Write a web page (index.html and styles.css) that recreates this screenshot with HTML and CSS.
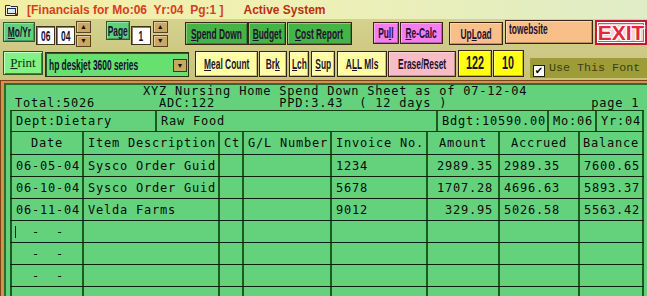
FILE: index.html
```html
<!DOCTYPE html>
<html>
<head>
<meta charset="utf-8">
<link rel="stylesheet" href="styles.css">
</head>
<body>
<div class="app">
  <div class="titlebar">
    <svg class="ticon" viewBox="0 0 13 12" width="13" height="12">
      <path d="M0.5 1.5 H5 L6 2.5 H12.5 V11.5 H0.5 Z" fill="#f6f2c8" stroke="#1a2a5a"/>
      <rect x="2.5" y="4.5" width="8" height="5" fill="#dfe6f4" stroke="#1a2a5a"/>
      <rect x="10" y="9.5" width="2" height="2" fill="#8a1a10"/>
    </svg>
    <span class="ttext">[Financials for Mo:06  Yr:04  Pg:1 ]</span>
    <span class="ttext status">Active System</span>
  </div>

  <div class="toolbar">
    <div class="bar bar1">
      <div class="btn b-lbl w-moyr"><span><u>M</u>o/Yr</span></div>
      <div class="field w-num ml1"><span>06</span></div>
      <div class="field w-num ml1"><span>04</span></div>
      <div class="spin ml1"><span class="sp">&#9650;</span><span class="sp">&#9660;</span></div>
      <div class="btn b-lbl w-page"><span>Page</span></div>
      <div class="field w-one ml1"><span>1</span></div>
      <div class="spin ml2"><span class="sp">&#9650;</span><span class="sp">&#9660;</span></div>
      <div class="btn b-green w-spend"><span><u>S</u>pend Down</span></div>
      <div class="btn b-green w-budget"><span><u>B</u>udget</span></div>
      <div class="btn b-green w-cost ml1"><span><u>C</u>ost Report</span></div>
      <div class="btn b-pink w-pull"><span>Pu<u>l</u>l</span></div>
      <div class="btn b-pink w-recalc ml1"><span><u>R</u>e-Calc</span></div>
      <div class="btn b-peach w-upload"><span>Up<u>L</u>oad</span></div>
      <div class="btn b-peach w-site"><span>towebsite</span></div>
      <div class="exit"><span>EXIT</span></div>
    </div>

    <div class="bar bar2">
      <div class="print"><u>P</u>rint</div>
      <div class="select"><span class="seltext">hp deskjet 3600 series</span><span class="drop">&#9660;</span></div>
      <div class="btn b-cream w-meal"><span><u>M</u>eal Count</span></div>
      <div class="btn b-cream w-brk ml1"><span>Br<u>k</u></span></div>
      <div class="btn b-cream w-lch ml2"><span><u>L</u>ch</span></div>
      <div class="btn b-cream w-sup ml2"><span><u>S</u>up</span></div>
      <div class="btn b-cream w-all ml2"><span>A<u>L</u>L Mls</span></div>
      <div class="btn b-rose w-erase ml1"><span>Erase/Reset</span></div>
      <div class="btn b-yellow w-122"><span>122</span></div>
      <div class="btn b-yellow w-10 ml1"><span>10</span></div>
      <div class="fontband"><span class="check">&#10004;</span><span class="fonttext">Use This Font</span></div>
    </div>
  </div>

  <div class="panel">
    <div class="sheet">
      <div class="head">                XYZ Nursing Home Spend Down Sheet as of 07-12-04
Total:5026        ADC:122        PPD:3.43  ( 12 days )                  page 1</div>

      <div class="dept">
        <div class="c">Dept:Dietary</div>
        <div class="c">Raw Food</div>
        <div class="c">Bdgt:10590.00</div>
        <div class="c">Mo:06</div>
        <div class="c last">Yr:04</div>
      </div>

      <div class="row hdr">
        <div class="c ctr">Date</div>
        <div class="c">Item Description</div>
        <div class="c">Ct</div>
        <div class="c">G/L Number</div>
        <div class="c">Invoice No.</div>
        <div class="c ctr">Amount</div>
        <div class="c ctr">Accrued</div>
        <div class="c ctr last">Balance</div>
      </div>

      <div class="row">
        <div class="c">06-05-04</div>
        <div class="c">Sysco Order Guid</div>
        <div class="c"></div>
        <div class="c"></div>
        <div class="c">1234</div>
        <div class="c num">2989.35</div>
        <div class="c">2989.35</div>
        <div class="c last">7600.65</div>
      </div>
      <div class="row">
        <div class="c">06-10-04</div>
        <div class="c">Sysco Order Guid</div>
        <div class="c"></div>
        <div class="c"></div>
        <div class="c">5678</div>
        <div class="c num">1707.28</div>
        <div class="c">4696.63</div>
        <div class="c last">5893.37</div>
      </div>
      <div class="row">
        <div class="c">06-11-04</div>
        <div class="c">Velda Farms</div>
        <div class="c"></div>
        <div class="c"></div>
        <div class="c">9012</div>
        <div class="c num">329.95</div>
        <div class="c">5026.58</div>
        <div class="c last">5563.42</div>
      </div>
      <div class="row">
        <div class="c"><span class="caret"></span>  -  -</div>
        <div class="c"></div><div class="c"></div><div class="c"></div><div class="c"></div><div class="c"></div><div class="c"></div><div class="c last"></div>
      </div>
      <div class="row">
        <div class="c">  -  -</div>
        <div class="c"></div><div class="c"></div><div class="c"></div><div class="c"></div><div class="c"></div><div class="c"></div><div class="c last"></div>
      </div>
      <div class="row">
        <div class="c">  -  -</div>
        <div class="c"></div><div class="c"></div><div class="c"></div><div class="c"></div><div class="c"></div><div class="c"></div><div class="c last"></div>
      </div>
      <div class="row">
        <div class="c"></div>
        <div class="c"></div><div class="c"></div><div class="c"></div><div class="c"></div><div class="c"></div><div class="c"></div><div class="c last"></div>
      </div>
    </div>
  </div>
</div>
</body>
</html>
```

FILE: styles.css
```css
* { box-sizing: border-box; margin: 0; padding: 0; }
html, body { width: 647px; height: 296px; overflow: hidden; }
body { background: #c8c27e; font-family: "Liberation Sans", Arial, sans-serif; }

.app { display: flex; flex-direction: column; height: 296px; }

/* title bar */
.titlebar {
  height: 19px; display: flex; align-items: center; padding-left: 5px;
  background: linear-gradient(90deg, #f4eea4 0%, #eef0b4 45%, #e0ecc6 100%);
}
.ticon { width: 13px; height: 12px; margin-right: 9px; margin-top: 1px; }
.ttext { font-size: 12px; font-weight: bold; color: #d2401e; white-space: pre; }
.status { margin-left: 20px; color: #b8300f; }

/* toolbars */
.toolbar { background: linear-gradient(180deg, #d4d28e 0%, #c8c27c 100%); }
.bar { display: flex; align-items: flex-start; padding-left: 3px; }
.bar1 { height: 30px; }
.bar2 { height: 31px; }
.ml1 { margin-left: 1px; }
.ml2 { margin-left: 2px; }

.btn, .field, .select {
  font-family: "Liberation Sans", Arial, sans-serif;
  font-weight: bold; font-size: 14px; color: #1e1030; white-space: nowrap;
}
.btn {
  display: flex; align-items: center; justify-content: center;
  border: 1px solid #3a2414;
  box-shadow: inset 1px 1px 0 rgba(255,255,255,.35), inset -1px -1px 0 rgba(0,0,0,.25);
}
.btn span, .field span { display: inline-block; transform: scaleX(.6); }
.b-lbl { background: #5fd07c; border-color: #2e5a2e; }
.b-green { background: #44b444; }
.b-pink { background: #f27ef0; }
.b-peach { background: #f8c088; }
.b-cream { background: #ffffa2; }
.b-rose { background: #f8bcc6; }
.b-yellow { background: #ffff12; font-size: 18px; }

.w-moyr { width: 32px; height: 20px; margin-top: 3px; }
.w-page { width: 24px; height: 19px; margin-top: 2px; margin-left: 15px; }
.field {
  height: 19px; margin-top: 7px; background: #fff; border: 1px solid #40301c;
  display: flex; align-items: center; justify-content: center;
  color: #101030;
  box-shadow: inset 1px 1px 0 #8a8070;
}
.w-num { width: 19px; }
.w-one { width: 20px; }
.spin { display: flex; flex-direction: column; gap: 2px; width: 15px; margin-top: 2px; }
.sp {
  height: 12px; background: #c8a862; border: 1px solid #5a4020;
  font-size: 7px; line-height: 10px; text-align: center; color: #1a1008;
  box-shadow: inset 1px 1px 0 rgba(255,255,255,.4);
}
.w-spend { width: 63px; height: 23px; margin-top: 3px; margin-left: 17px; }
.w-budget { width: 38px; height: 23px; margin-top: 3px; }
.w-cost { width: 65px; height: 23px; margin-top: 3px; }
.w-pull { width: 26px; height: 22px; margin-top: 3px; margin-left: 21px; }
.w-recalc { width: 43px; height: 22px; margin-top: 3px; }
.w-upload { width: 55px; height: 23px; margin-top: 3px; margin-left: 6px; }
.w-site { width: 88px; height: 24px; margin-top: 1px; margin-left: 2px; justify-content: flex-start; align-items: flex-start; padding: 0 0 0 3px; }
.w-site span { transform-origin: left center; }

.exit {
  width: 52px; height: 25px; margin-top: 1px; margin-left: 2px;
  border: 2px solid #c41a30; background: #f6d4d4;
  box-shadow: inset 0 0 0 1px #fff, inset 0 0 0 2px #e04a5a;
  display: flex; align-items: center; justify-content: center;
  font-family: "Liberation Sans", Arial, sans-serif; font-size: 21px; font-weight: bold; color: #e2283c;
  text-shadow: 1px 1px 0 #fff, -1px -1px 0 #fff, 1px -1px 0 #fff, -1px 1px 0 #fff;
  line-height: 1;
}

.print {
  width: 40px; height: 24px; margin-top: 2px;
  background: #82f282; border: 1px solid #2a5a2a;
  box-shadow: inset 1px 1px 0 #c8ffc8, inset -1px -1px 0 #3a8a3a;
  font-family: "Liberation Serif", "Times New Roman", serif; font-size: 13px; color: #143014;
  display: flex; align-items: center; justify-content: center;
}
.select {
  width: 144px; height: 25px; margin-top: 3px; margin-left: 2px;
  background: #66e06e; border: 1px solid #2a3018;
  box-shadow: inset 1px 1px 0 #2a5a2a;
  display: flex; align-items: center; padding-left: 3px; padding-right: 1px;
  color: #10102a;
}
.seltext { flex: 1; min-width: 0; display: block; transform: scaleX(.6); transform-origin: left center; }
.drop {
  flex: none; width: 14px; height: 13px; margin-top: 2px; background: #c8a862; border: 1px solid #4a3418;
  font-size: 7px; line-height: 11px; text-align: center; color: #1a1008; font-weight: normal;
}
.w-meal { width: 63px; height: 26px; margin-top: 2px; margin-left: 6px; }
.w-brk { width: 28px; height: 26px; margin-top: 2px; }
.w-lch { width: 20px; height: 26px; margin-top: 2px; }
.w-sup { width: 24px; height: 26px; margin-top: 2px; }
.w-all { width: 50px; height: 26px; margin-top: 2px; }
.w-erase { width: 68px; height: 26px; margin-top: 2px; }
.w-122 { width: 34px; height: 27px; margin-top: 1px; margin-left: 2px; }
.w-10 { width: 31px; height: 27px; margin-top: 1px; }

.fontband {
  flex: 1; height: 20px; margin-top: 9px; margin-left: 6px;
  background: #9e9c38; display: flex; align-items: center; padding-left: 3px;
}
.check {
  width: 12px; height: 12px; background: #fff; border: 1px solid #202010;
  font-size: 10px; line-height: 10px; text-align: center; color: #000; margin-top: 5px;
  font-family: "DejaVu Sans", sans-serif;
}
.fonttext {
  margin-left: 4px; font-family: "Liberation Mono", "Courier New", monospace;
  font-size: 11.7px; color: #3e3c10;
}

/* report panel */
.panel {
  flex: 1; overflow: hidden;
  border-top: 1px solid #7a4418; border-left: 1px solid #7a4418;
  background: #d8904e; padding: 2px 0 0 3px;
}
.sheet {
  height: 100%; background: #64d27c;
  border-top: 2px solid #2c6a30; border-left: 2px solid #2c6a30;
  font-family: "DejaVu Sans Mono", monospace; font-size: 12px; letter-spacing: 0.78px; color: #0a0a0a;
}
.head { height: 25px; padding-left: 9px; line-height: 12px; white-space: pre; }

.dept, .row { display: grid; margin-left: 4px; width: 634px; }
.dept {
  grid-template-columns: 145px 281px 111px 48px 49px;
  height: 22px; border-top: 1px solid #123a16; border-bottom: 1px solid #123a16;
}
.row {
  grid-template-columns: 72px 136px 24px 88px 96px 72px 80px 66px;
  height: 22px; border-bottom: 1px solid #0c1e0c;
}
.row.hdr { height: 23px; }
.c {
  border-left: 2px solid #1c5a22; padding: 0 4px 0 4px;
  display: flex; align-items: center; white-space: pre; overflow: hidden;
}
.c.last { border-right: 2px solid #1c5a22; }
.c.ctr { justify-content: center; }
.c.num { justify-content: flex-end; padding-right: 5px; }
.caret { display: inline-block; width: 1px; height: 12px; background: #202020; margin-left: -1px; }
```
